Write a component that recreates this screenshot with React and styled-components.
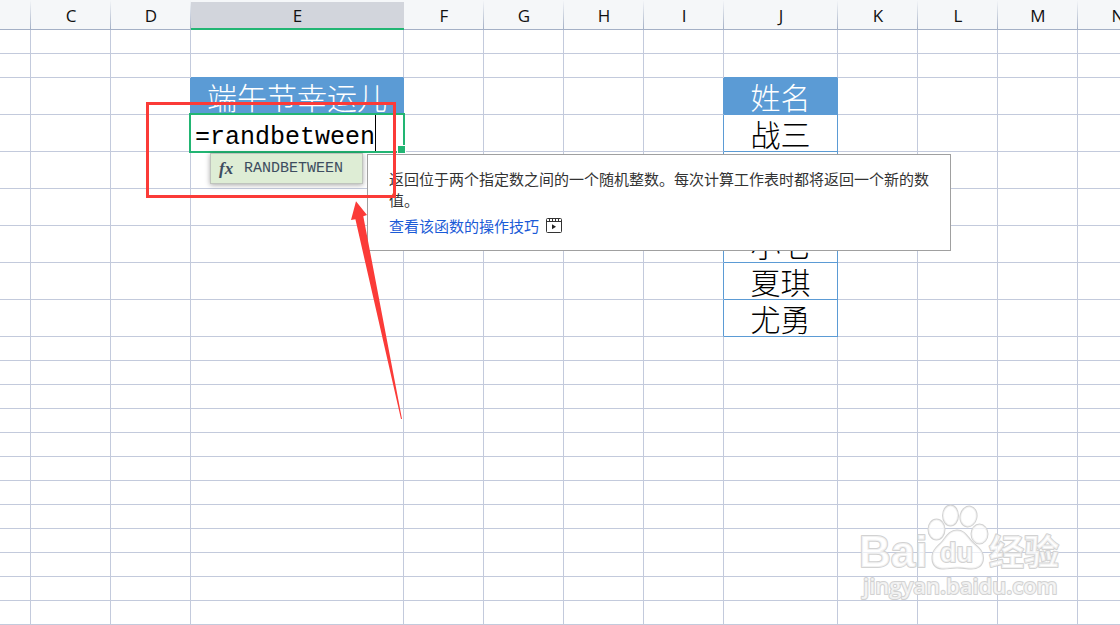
import React, { useState } from "react";
import styled, { createGlobalStyle } from "styled-components";

const GRID = "#c3cadc";
const TABLE_BLUE = "#5b9bd5";
const GREEN = "#22b573";
const RED = "#fb3b38";

const GlobalStyle = createGlobalStyle`
  * {
    box-sizing: border-box;
  }
  body {
    margin: 0;
    background: #fff;
    font-family: "Open Sans", "Noto Sans CJK SC", sans-serif;
  }
`;

const Sheet = styled.main`
  position: relative;
  width: 100%;
  overflow: hidden;
`;

const Grid = styled.table`
  width: 1158px;
  table-layout: fixed;
  border-collapse: separate;
  border-spacing: 0;
`;

const Col = styled.col`
  width: ${(props) => props.$width}px;
`;

const ColumnHead = styled.th`
  height: 30px;
  padding: 2px 0 0;
  border-bottom: 1px solid #a4b0c6;
  background: linear-gradient(#f5f7f9, #a4b0c6) right / 1px 100% no-repeat, #f5f7f9;
  color: #111;
  font-size: 17px;
  font-weight: 400;
  line-height: 27px;
  text-align: center;

  &[aria-selected="true"] {
    border-bottom-color: ${GREEN};
    background: linear-gradient(#f5f7f9 2px, #d2d5dc 2px);
    box-shadow: inset 0 -1px ${GREEN};
  }
`;

const Cell = styled.td`
  position: relative;
  height: ${(props) => props.$height}px;
  padding: 0;
  border-right: 1px solid ${(props) => props.$right};
  border-bottom: 1px solid ${(props) => props.$bottom};
  background: ${(props) => (props.$title ? TABLE_BLUE : "#fff")};
  color: ${(props) => (props.$title ? "#fff" : "#000")};
  font-family: "Noto Sans CJK SC", sans-serif;
  font-size: 30px;
  font-weight: 300;
  line-height: 36px;
  text-align: center;
  white-space: nowrap;
`;

const CellText = styled.span`
  display: block;
  height: 36px;
`;

const EditorFrame = styled.div`
  position: absolute;
  inset: -2px;
  z-index: 1;
  display: flex;
  padding-left: 4px;
  border: 2px solid ${GREEN};
  background: #fff;

  &::after {
    content: "";
    position: absolute;
    right: -3px;
    bottom: -3px;
    width: 7px;
    height: 7px;
    border: 1px solid #fff;
    background: ${GREEN};
  }
`;

const Formula = styled.input`
  width: 181px;
  height: 36px;
  padding: 9px 0 0;
  border: 0;
  border-right: 1px solid #000;
  outline: none;
  background: transparent;
  color: #000;
  font-family: "Liberation Mono", monospace;
  font-size: 25px;
`;

const Suggestions = styled.ul`
  position: absolute;
  top: 38px;
  left: 19px;
  z-index: 2;
  width: 153px;
  margin: 0;
  padding: 0;
  border: 1px solid #bfc4bd;
  box-shadow: 0 1px 5px rgba(0, 0, 0, 0.35);
  list-style: none;
`;

const Suggestion = styled.button`
  display: flex;
  align-items: center;
  gap: 11px;
  width: 100%;
  height: 29px;
  padding: 0 8px;
  border: 0;
  background: #deedd5;
  color: #3d4c60;
  font-family: "Liberation Mono", monospace;
  font-size: 15px;
  line-height: 29px;
`;

const Fx = styled.i`
  width: 14px;
  font-family: "Liberation Serif", serif;
  font-size: 17px;
  font-weight: 700;
`;

const Tip = styled.aside`
  position: absolute;
  top: 39px;
  left: 176px;
  z-index: 3;
  width: 584px;
  padding: 13px 20px 14px 21px;
  border: 1px solid #a0a0a0;
  background: #fff;
  color: #333;
  font-size: 15px;
  font-weight: 400;
  line-height: 21px;
  text-align: left;
  white-space: normal;
`;

const TipText = styled.p`
  margin: 0 0 5px;
`;

const TipLink = styled.a`
  display: flex;
  align-items: center;
  gap: 7px;
  color: #1b5bd7;
  text-decoration: none;
`;

const Highlight = styled.div`
  position: absolute;
  top: -13px;
  left: -45px;
  z-index: 4;
  width: 250px;
  height: 96px;
  border: 3px solid ${RED};
  pointer-events: none;
`;

const Arrow = styled.svg`
  position: absolute;
  top: 86px;
  left: 159px;
  z-index: 4;
  pointer-events: none;
`;

const Watermark = styled.svg`
  position: absolute;
  right: 54px;
  bottom: 20px;
  z-index: 1;
  pointer-events: none;
`;

const columns = [
  { name: "B", width: 31 },
  { name: "C", width: 80 },
  { name: "D", width: 80 },
  { name: "E", width: 213 },
  { name: "F", width: 80 },
  { name: "G", width: 80 },
  { name: "H", width: 80 },
  { name: "I", width: 80 },
  { name: "J", width: 114 },
  { name: "K", width: 80 },
  { name: "L", width: 80 },
  { name: "M", width: 80 },
  { name: "N", width: 80 },
];

const rows = [
  { height: 24 },
  { height: 24 },
  { height: 37, E: "端午节幸运儿", J: "姓名", title: true },
  { height: 37, J: "战三" },
  { height: 37 },
  { height: 37 },
  { height: 37, J: "小七" },
  { height: 37, J: "夏琪" },
  { height: 37, J: "尤勇" },
  ...Array.from({ length: 12 }, () => ({ height: 24 })),
];

const TITLE_ROW = 2;
const LAST_ROW = 8;

const inTable = (row, col) => {
  const name = columns[col]?.name;
  if (name === "J") return row >= TITLE_ROW && row <= LAST_ROW;
  return name === "E" && row === TITLE_ROW;
};

// a table's outer border sits on the grid line of the cell before it
const lineColor = (row, col, nextRow, nextCol) =>
  inTable(row, col) || inTable(nextRow, nextCol) ? TABLE_BLUE : GRID;

const VideoIcon = () => (
  <svg width="16" height="15" viewBox="0 0 16 15" fill="none" stroke="#333" aria-hidden="true">
    <rect x="0.5" y="0.5" width="15" height="14" rx="1" />
    <path d="M0.5 3.5h15M3.5 0.5v3M6.5 0.5v3M9.5 0.5v3M12.5 0.5v3" />
    <path d="M6 6.2v5l4-2.5z" fill="#222" stroke="none" />
  </svg>
);

const FormulaEditor = () => {
  const [formula, setFormula] = useState("=randbetween");

  return (
    <>
      <EditorFrame>
        <Formula
          aria-label="E"
          spellCheck={false}
          value={formula}
          onChange={(e) => setFormula(e.target.value)}
        />
      </EditorFrame>
      <Suggestions>
        <li>
          <Suggestion type="button" onClick={() => setFormula("=RANDBETWEEN(")}>
            <Fx>fx</Fx>
            RANDBETWEEN
          </Suggestion>
        </li>
      </Suggestions>
      <Tip>
        <TipText>返回位于两个指定数之间的一个随机整数。每次计算工作表时都将返回一个新的数值。</TipText>
        <TipLink href="#tips">
          查看该函数的操作技巧
          <VideoIcon />
        </TipLink>
      </Tip>
      <Highlight />
      <Arrow width="54" height="220" viewBox="0 0 54 220" aria-hidden="true">
        <path d="M6 0.3L17 14l-3.7 1.2L52 218l-1 0L5.4 18.3L1 19z" fill={RED} />
      </Arrow>
    </>
  );
};

const BaiduMark = () => (
  <Watermark width="210" height="104" viewBox="856 501 210 104" aria-hidden="true">
    <g
      fill="#fff"
      fillOpacity="0.7"
      stroke="#d2d2d2"
      strokeWidth="2"
      strokeLinejoin="round"
      paintOrder="stroke"
    >
      <ellipse cx="936.5" cy="529.5" rx="8" ry="10" />
      <ellipse cx="950.5" cy="515.5" rx="7.5" ry="10" />
      <ellipse cx="968.5" cy="516.5" rx="8" ry="10" transform="rotate(12 968.5 516.5)" />
      <ellipse cx="979.5" cy="534" rx="8" ry="9.5" />
      <path d="M957 530.5C965 530.5 967 537 972 542C977 547 983 550 983 558C983 566 977 569 970 568.5C965 568 962 567.5 957 567.5C951 567.5 947 569 942 568.5C935 568 932 563 932.5 556C933 549 939 546 943 541C947 536 950 530.5 957 530.5Z" />
      <text x="859" y="567" fontFamily="Liberation Sans, sans-serif" fontSize="44" fontWeight="700">Bai</text>
      <text x="940" y="562" fontFamily="Liberation Sans, sans-serif" fontSize="27" fontWeight="700">du</text>
      <text x="989" y="565" fontFamily="Noto Sans CJK SC, sans-serif" fontSize="35" fontWeight="700">经验</text>
      <text x="863" y="594" fontFamily="Open Sans, sans-serif" fontSize="22" fontWeight="600">jingyan.baidu.com</text>
    </g>
  </Watermark>
);

const App = () => (
  <>
    <GlobalStyle />
    <Sheet>
      <Grid>
        <colgroup>
          {columns.map(({ name, width }) => (
            <Col key={name} $width={width} />
          ))}
        </colgroup>
        <thead>
          <tr>
            {columns.map(({ name }) => (
              <ColumnHead key={name} scope="col" aria-selected={name === "E"}>
                {name !== "B" && name}
              </ColumnHead>
            ))}
          </tr>
        </thead>
        <tbody>
          {rows.map((row, r) => (
            <tr key={r}>
              {columns.map(({ name }, c) => (
                <Cell
                  key={name}
                  $height={row.height}
                  $title={row.title && inTable(r, c)}
                  $right={lineColor(r, c, r, c + 1)}
                  $bottom={lineColor(r, c, r + 1, c)}
                >
                  {row[name] && <CellText>{row[name]}</CellText>}
                  {name === "E" && r === TITLE_ROW + 1 && <FormulaEditor />}
                </Cell>
              ))}
            </tr>
          ))}
        </tbody>
      </Grid>
      <BaiduMark />
    </Sheet>
  </>
);

export default App;
